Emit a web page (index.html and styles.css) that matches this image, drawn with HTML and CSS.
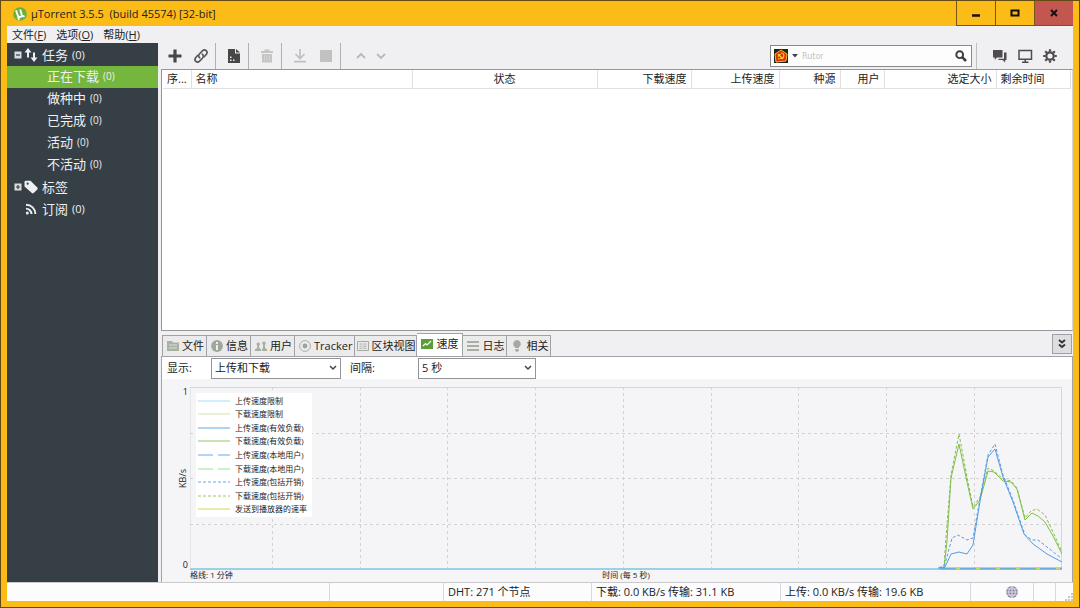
FILE: index.html
```html
<!DOCTYPE html>
<html lang="zh-CN">
<head>
<meta charset="utf-8">
<title>µTorrent 3.5.5</title>
<link rel="stylesheet" href="styles.css">
</head>
<body>
<div class="window">
  <header class="titlebar">
    <svg class="logo" viewBox="0 0 14 14"><circle cx="7" cy="7" r="6.8" fill="#68b03f"/><path d="M3 3.2 4.6 8c.6 2 2.800 2.600 4.200 1.200M7.200 2.500l1.500 5.200c.5 1.500 1.600 1.800 2.800 1.300M5 9.500l1 3.500" fill="none" stroke="#fff" stroke-width="1.900"/></svg>
    <h1 class="title">µTorrent 3.5.5&nbsp; (build 45574) [32-bit]</h1>
    <div class="window-buttons">
      <button class="winbtn" aria-label="最小化"><svg viewBox="0 0 12 12"><path d="M2 8.500h8" stroke="#111" stroke-width="2.500"/></svg></button>
      <button class="winbtn" aria-label="最大化"><svg viewBox="0 0 12 12"><path d="M2.500 3.500h7v5h-7z" fill="none" stroke="#111" stroke-width="2"/></svg></button>
      <button class="winbtn close" aria-label="关闭"><svg viewBox="0 0 12 12"><path d="M3 3l6 6M9 3l-6 6" stroke="#111" stroke-width="1.900"/></svg></button>
    </div>
  </header>
  <div class="client">
    <nav class="menubar">
      <button>文件(<u>F</u>)</button>
      <button>选项(<u>O</u>)</button>
      <button>帮助(<u>H</u>)</button>
    </nav>
    <div class="workspace">
      <nav class="sidebar">
        <a class="group" href="#tasks">
          <svg class="toggle" viewBox="0 0 8 8"><path d="M.5.5h7v7h-7z" fill="#d9dcde"/><path d="M2 4h4" stroke="#364047" stroke-width="1.200"/></svg>
          <svg class="side-icon" viewBox="0 0 14 14"><path d="M4 0 .5 4.500H3v5h2v-5h2.500zM10 14l3.500-4.500H11v-5H9v5H6.500z" fill="#eef0f1"/></svg>
          任务 <small>(0)</small></a>
        <a class="item selected" href="#downloading">正在下载 <small>(0)</small></a>
        <a class="item" href="#seeding">做种中 <small>(0)</small></a>
        <a class="item" href="#done">已完成 <small>(0)</small></a>
        <a class="item" href="#active">活动 <small>(0)</small></a>
        <a class="item" href="#inactive">不活动 <small>(0)</small></a>
        <a class="group" href="#labels">
          <svg class="toggle" viewBox="0 0 8 8"><path d="M.5.5h7v7h-7z" fill="#d9dcde"/><path d="M2 4h4M4 2v4" stroke="#364047" stroke-width="1.200"/></svg>
          <svg class="side-icon" viewBox="0 0 14 14"><path fill-rule="evenodd" d="M.5 2q0-1.300 1.300-1.300h4.700L13.300 7.600q.8.900 0 1.800L9.700 13q-.9.800-1.800 0L.5 6.500zM3.600 2.600a1.100 1.100 0 1 0 .1 2.200 1.100 1.100 0 0 0-.1-2.200z" fill="#eef0f1"/></svg>
          标签</a>
        <a class="group feed" href="#feeds">
          <svg class="side-icon" viewBox="0 0 14 14"><circle cx="3.300" cy="10.900" r="1.500" fill="#eef0f1"/><path d="M2 6.600a5.500 5.500 0 0 1 5.500 5.500M2 2.700a9.400 9.400 0 0 1 9.400 9.400" fill="none" stroke="#eef0f1" stroke-width="1.900"/></svg>
          订阅 <small>(0)</small></a>
      </nav>
      <main class="main">
        <div class="toolbar">
          <div class="tools">
            <button aria-label="添加"><svg viewBox="0 0 16 16"><path d="M8 1.500v13M1.500 8h13" stroke="#474747" stroke-width="3.200"/></svg></button>
            <button aria-label="添加链接"><svg viewBox="0 0 16 16"><g fill="none" stroke="#555" stroke-width="1.600" stroke-linecap="round"><path d="M6.800 9.800C5 8.400 5.600 6.900 6.600 5.800L9.400 2.900c2.700-2.400 6 .6 4 3.400l-2.200 2.400"/><path d="M9.200 6.200c1.800 1.400 1.200 2.900.2 4l-2.800 2.900c-2.700 2.400-6-.6-4-3.400l2.200-2.400"/></g></svg></button>
          </div>
          <div class="tools">
            <button aria-label="制作种子"><svg viewBox="0 0 16 16"><path fill-rule="evenodd" d="M2 1h7v4.500h5V15H2zM4 8.500V10h1.500V8.500zM4 11.500V13h1.500v-1.500zM7 11.500V13h1.500v-1.500z" fill="#474747"/><path d="M10 1v3.500h4z" fill="#474747"/></svg></button>
          </div>
          <div class="tools">
            <button aria-label="删除" disabled><svg viewBox="0 0 16 16"><path d="M2 3h3.500V1.500h5V3H14v2H2zM3 6h10v8.500H3z" fill="#c5c5c6"/><path d="M5.500 7.500v5M8 7.500v5M10.500 7.500v5" stroke="#d4d4d5"/></svg></button>
          </div>
          <div class="tools">
            <button aria-label="开始" disabled><svg viewBox="0 0 16 16"><path d="M8 1v9M3.500 6 8 10.500 12.500 6M2 13.700h12" fill="none" stroke="#c0c0c1" stroke-width="1.700"/></svg></button>
            <button aria-label="停止" disabled><svg viewBox="0 0 16 16"><path d="M2 2h12v12H2z" fill="#c1c1c2"/></svg></button>
          </div>
          <div class="tools arrows">
            <button aria-label="上移" disabled><svg viewBox="0 0 16 16"><path d="M4 10l4-4 4 4" fill="none" stroke="#b9b9bb" stroke-width="1.800"/></svg></button>
            <button aria-label="下移" disabled><svg viewBox="0 0 16 16"><path d="M4 6l4 4 4-4" fill="none" stroke="#b9b9bb" stroke-width="1.800"/></svg></button>
          </div>
          <form class="search">
            <button type="button" class="engine" aria-label="搜索引擎">
              <svg class="engine-logo" viewBox="0 0 14 14"><path d="M0 0h14v14H0z" fill="#17241f"/><path d="M7 1l6 4-1 7-10 1L1 5z" fill="#df2a10" stroke="#f6c51b"/><path d="M4 5l5 5M4 7.500 6.500 5M7 4c4 0 3.500 5 .5 5.500L4 10" fill="none" stroke="#ffcf20" stroke-width="1.200"/></svg>
              <svg class="caret" viewBox="0 0 6 4"><path d="M0 0h6L3 3.500z" fill="#444"/></svg>
            </button>
            <input type="text" placeholder="Rutor" aria-label="搜索">
            <button type="button" aria-label="搜索"><svg class="lens" viewBox="0 0 12 12"><circle cx="4.700" cy="4.700" r="3.400" fill="none" stroke="#3e3e3e" stroke-width="1.900"/><path d="M7.200 7.200 11 11" stroke="#3e3e3e" stroke-width="2.600"/></svg></button>
          </form>
          <div class="extras">
            <button aria-label="聊天"><svg viewBox="0 0 16 16"><path d="M1 2h9.500v7.500H5L2.800 12V9.500H1z" fill="#4f4b4e"/><path d="M12 4.500h2.500V12h-1.300v2.500L10.500 12H6.500v-1.300H12z" fill="#4f4b4e"/></svg></button>
            <button aria-label="远程"><svg viewBox="0 0 16 16"><path d="M2 2.500h12.500v8.700H2zM5 14.200h6.500M8.200 11v3" fill="none" stroke="#4f4b4e" stroke-width="1.500"/></svg></button>
            <button aria-label="设置"><svg viewBox="0 0 16 16"><circle cx="8" cy="8" r="3.700" fill="none" stroke="#4f4b4e" stroke-width="2.200"/><path d="M8 1.200v2.300M8 12.500v2.300M1.200 8h2.300M12.500 8h2.300M3.200 3.200l1.600 1.600M11.200 11.200l1.600 1.600M12.800 3.200l-1.600 1.600M4.800 11.200l-1.600 1.600" stroke="#4f4b4e" stroke-width="2.200"/></svg></button>
          </div>
        </div>
        <section class="torrents">
          <table>
            <colgroup><col class="c-order"><col class="c-name"><col class="c-status"><col class="c-down"><col class="c-up"><col class="c-seeds"><col class="c-peers"><col class="c-size"><col></colgroup>
            <thead><tr><th>序...</th><th>名称</th><th class="center">状态</th><th class="right">下载速度</th><th class="right">上传速度</th><th class="right">种源</th><th class="right">用户</th><th class="right">选定大小</th><th>剩余时间</th></tr></thead>
          </table>
        </section>
        <div class="tabbar">
          <div class="tabs" role="tablist">
            <button role="tab"><svg viewBox="0 0 12 12"><path d="M0 1h5l1 1.500h6V11H0z" fill="#a9b0a5"/><path d="M2 5h8M2 8h8" stroke="#dce0da"/></svg>文件</button>
            <button role="tab"><svg viewBox="0 0 12 12"><circle cx="6" cy="6" r="5.900" fill="#9fa79c"/><path d="M6 2v2M6 5v5" stroke="#eceeeb" stroke-width="2"/></svg>信息</button>
            <button role="tab"><svg viewBox="0 0 12 12"><path d="M3.200 2.500a1.700 1.700 0 0 1 1 3.100V8l1.800 1.200V11H0V9.200L2.200 8V5.600a1.700 1.700 0 0 1 1-3.100zM9 1.500a1.700 1.700 0 0 1 1 3.100V8l2 1.200V11H7V9.200L8 8V4.600a1.700 1.700 0 0 1 1-3.100z" fill="#a6b0a4"/></svg>用户</button>
            <button role="tab"><svg viewBox="0 0 12 12"><circle cx="6" cy="6" r="5.400" fill="none" stroke="#a9b0a7"/><circle cx="6" cy="6" r="2.400" fill="#9ba498"/></svg>Tracker</button>
            <button role="tab"><svg viewBox="0 0 12 12"><path d="M.5 1.500h11v9H.5zM2.500 4h3M6.500 4h3M2.500 6.200h2M5.500 6.200h4M2.500 8.300h3M6.500 8.300h3" fill="none" stroke="#a4aaa2"/></svg>区块视图</button>
            <button role="tab" aria-selected="true" class="current"><svg viewBox="0 0 12 12"><path d="M0 1h12v10H0z" fill="#5b9e35"/><path d="M2 8l2.500-2.500L6 7l4-4" fill="none" stroke="#fff" stroke-width="1.200"/></svg>速度</button>
            <button role="tab"><svg viewBox="0 0 12 12"><path d="M0 2h12M0 6h12M0 10h12" stroke="#a8afa4" stroke-width="1.800"/></svg>日志</button>
            <button role="tab"><svg viewBox="0 0 12 12"><path d="M6 0a3.800 3.800 0 0 1 2 7v1H4V7a3.800 3.800 0 0 1 2-7zM4.300 9h3.400v2L6 12l-1.700-1z" fill="#a4aaa1"/></svg>相关</button>
          </div>
          <button class="collapse" aria-label="折叠"><svg viewBox="0 0 12 12"><path d="M3 2l3 2.500L9 2M3 6.500 6 9l3-2.500" fill="none" stroke="#333" stroke-width="1.900"/></svg></button>
        </div>
        <section class="panel">
          <div class="options">
            <label for="show">显示:</label>
            <select id="show" class="wide"><option>上传和下载</option></select>
            <label for="interval" class="second">间隔:</label>
            <select id="interval"><option>5 秒</option></select>
          </div>
          <div class="chart">
            <div class="yaxis"><span>1</span><span class="unit">KB/s</span><span>0</span></div>
            <div class="plot">
              <svg class="graph" viewBox="0 0 872 183" preserveAspectRatio="none">
                <path class="frame" d="M0 182V.5H871.500V182"/>
                <path class="grid" d="M82.500 0v182M170.500 0v182M257.500 0v182M345.500 0v182M433.500 0v182M521.500 0v182M608.500 0v182M696.500 0v182M784.500 0v182M0 46.500h872M0 91.500h872M0 137.500h872"/>
                <path class="base" d="M0 182h872"/>
                <path class="bottom" d="M750 181.500h122"/>
                <path class="yellow" d="M766 181.500h106" stroke-dasharray="4 16"/>
                <path class="green dash" d="M754 181 756 150 761 88 769 47 777 90 783 120 790 110 798 81 804 84 813 92 821 94 827 101 835 131 841 124 847 122 855 128 863 145 872 165"/>
                <path class="green" d="M754 181 757 154 761 91 769 57 777 95 783 122 790 113 798 84 804 85 813 94 821 95 827 102 835 133 842 126 848 129 855 135 863 149 872 167"/>
                <path class="blue dash" d="M749 181 755 177 762 151 768 148 777 153 783 151 791 106 798 68 805 57 813 88 823 113 835 148 842 153 848 153 857 160 871 171"/>
                <path class="blue" d="M748 181 755 180 761 167 769 165 777 167 783 158 791 108 798 70 805 62 813 90 823 115 834 147 843 157 857 167 872 175"/>
              </svg>
              <ul class="legend">
                <li><svg viewBox="0 0 32 4"><path d="M0 2h32" stroke="#a2dcf3"/></svg>上传速度限制</li>
                <li><svg viewBox="0 0 32 4"><path d="M0 2h32" stroke="#cfe5a5"/></svg>下载速度限制</li>
                <li><svg viewBox="0 0 32 4"><path d="M0 2h32" stroke="#60a5e7"/></svg>上传速度(有效负载)</li>
                <li><svg viewBox="0 0 32 4"><path d="M0 2h32" stroke="#91c760"/></svg>下载速度(有效负载)</li>
                <li><svg viewBox="0 0 32 4"><path d="M0 2h32" stroke="#68aaf0" stroke-dasharray="15 5"/></svg>上传速度(本地用户)</li>
                <li><svg viewBox="0 0 32 4"><path d="M0 2h32" stroke="#99e59b" stroke-dasharray="15 5"/></svg>下载速度(本地用户)</li>
                <li><svg viewBox="0 0 32 4"><path d="M0 2h32" stroke="#62a8ed" stroke-dasharray="3 2"/></svg>上传速度(包括开销)</li>
                <li><svg viewBox="0 0 32 4"><path d="M0 2h32" stroke="#9cc860" stroke-dasharray="3 2"/></svg>下载速度(包括开销)</li>
                <li><svg viewBox="0 0 32 4"><path d="M0 2h32" stroke="#d3d84c"/></svg>发送到播放器的速率</li>
              </ul>
            </div>
            <div class="xaxis"><span>格线: 1 分钟</span><span>时间 (每 5 秒)</span><span></span></div>
          </div>
        </section>
      </main>
    </div>
    <footer class="statusbar">
      <span></span><span></span><span>DHT: 271 个节点</span><span>下载: 0.0 KB/s 传输: 31.1 KB</span><span>上传: 0.0 KB/s 传输: 19.6 KB</span>
      <span class="globe"><svg viewBox="0 0 12 12"><circle cx="6" cy="6" r="5.900" fill="#8c84a4"/><path d="M0 6h12M1 3h10M1 9h10M6 0v12M6 .5c-4.500 3-4.500 8 0 11M6 .5c4.500 3 4.500 8 0 11" fill="none" stroke="#eeeaf4" stroke-width=".8"/></svg></span>
      <span></span>
      <span class="grip"><svg viewBox="0 0 8 8"><path d="M6 0h2v2H6zM3 3h2v2H3zM6 3h2v2H6zM0 6h2v2H0zM3 6h2v2H3zM6 6h2v2H6z" fill="#c5c5c5"/></svg></span>
    </footer>
  </div>
</div>
</body>
</html>
```
FILE: styles.css
```css
* { box-sizing: border-box; }
body {
  margin: 0;
  font: 11px/16px "Open Sans", "Noto Sans CJK SC", sans-serif;
  color: #222;
}
button { margin: 0; padding: 0; border: 0; background: none; font: inherit; color: inherit; }
svg { display: block; flex: none; }

.window {
  display: flex;
  flex-direction: column;
  height: 100vh;
  padding: 0 6px 6px;
  border: 1px solid #634b12;
  background: #fbbc17;
}
.titlebar { display: flex; align-items: center; flex: none; height: 25px; padding-left: 6px; gap: 4px; }
.logo { width: 14px; height: 14px; }
.title { margin: 0; font-size: 11px; font-weight: 400; flex: 1; }
.window-buttons { display: flex; align-self: stretch; }
.winbtn {
  display: grid;
  place-items: center;
  width: 39px;
  border: solid #765615;
  border-width: 0 0 1px 1px;
}
.winbtn svg { width: 12px; height: 12px; }
.winbtn.close { background: #c35750; }

.client { display: flex; flex-direction: column; flex: 1; min-height: 0; background: #f0eff1; }
.menubar { display: flex; align-items: center; gap: 10px; height: 17px; padding-left: 5px; flex: none; }
.workspace { display: flex; flex: 1; min-height: 0; }

.sidebar { width: 151px; flex: none; background: #363f46; color: #eef0f1; padding-top: 1px; }
.sidebar a { display: flex; align-items: center; height: 22px; color: inherit; text-decoration: none; font-size: 13px; }
.sidebar small { font-size: 11px; margin-left: 4px; }
.sidebar .item { padding: 0 0 2px 40px; }
.sidebar .item small { font-size: 10px; }
.sidebar .selected { background: #75b63d; }
.sidebar .group { padding-left: 7px; }
.sidebar .feed { padding-left: 17px; }
.toggle { width: 8px; height: 8px; margin-right: 2px; }
.side-icon { width: 14px; height: 14px; margin-right: 4px; }

.main { display: flex; flex-direction: column; flex: 1; min-width: 0; padding-left: 3px; }
.toolbar { display: flex; height: 26px; flex: none; }
.tools { display: flex; align-items: center; gap: 10px; padding: 0 6px 0 10px; border-right: 1px solid #b0b0b1; }
.tools:first-child { padding: 0 6px; }
.tools svg, .extras svg { width: 16px; height: 16px; }
.tools.arrows { border: 0; gap: 4px; padding-left: 12px; }
.search {
  display: flex;
  align-items: center;
  width: 202px;
  height: 22px;
  margin: 2px 4px 0 auto;
  padding: 0 4px 0 3px;
  border: 1px solid #89898b;
  background: #fdfdfd;
}
.search input {
  flex: 1;
  min-width: 0;
  padding: 0 4px;
  border: 0;
  background: transparent;
  font: 8px "DejaVu Sans", sans-serif;
}
.search input::placeholder { color: #c3c3c3; opacity: 1; }
.engine { display: flex; align-items: center; gap: 4px; }
.engine-logo { width: 14px; height: 14px; }
.caret { width: 6px; height: 4px; }
.lens { width: 12px; height: 12px; }
.extras { display: flex; align-items: center; gap: 9px; padding: 0 15px; border-left: 1px solid #c0c0c1; }

.torrents { height: 262px; flex: none; border: 1px solid #96969b; border-right-color: #d5d5d8; background: #fff; padding: 0 1px; }
table { width: 100%; table-layout: fixed; border-collapse: collapse; }
th {
  height: 18px;
  padding: 0 4px;
  border: solid #e1e1e3;
  border-width: 0 1px 1px 0;
  font-weight: 400;
  text-align: left;
  white-space: nowrap;
}
th.right { text-align: right; }
th.center { text-align: center; }
.c-order { width: 28px; }
.c-name { width: 221px; }
.c-status { width: 185px; }
.c-down { width: 94px; }
.c-up { width: 88px; }
.c-seeds { width: 61px; }
.c-peers { width: 44px; }
.c-size { width: 112px; }

.tabbar { display: flex; justify-content: space-between; align-items: flex-end; height: 25px; flex: none; padding: 0 1px; }
.tabs { display: flex; align-items: flex-end; }
.tabs button {
  display: flex;
  align-items: center;
  gap: 3px;
  height: 21px;
  padding: 0 2px 0 4px;
  border: solid #a2a2a6;
  border-width: 1px 1px 0 0;
  background: #ebebec;
}
.tabs button:nth-child(5) { padding: 0 1px 0 2px; gap: 2px; }
.tabs button:first-child { border-left-width: 1px; }
.tabs svg { width: 12px; height: 12px; }
.tabs .current { height: 23px; padding: 0 4px 3px; background: #fff; }
.collapse { display: grid; place-items: center; width: 20px; height: 20px; margin-bottom: 2px; border: 1px solid #a0a0a4; background: #dedee1; }
.collapse svg { width: 12px; height: 12px; }

.panel { display: flex; flex-direction: column; flex: 1; min-height: 0; border: solid #a2a2a8; border-width: 1px 1px 0; background: #fff; }
.options { display: flex; align-items: center; height: 22px; flex: none; padding-left: 5px; }
.options label { width: 44px; }
.options .second { width: 68px; margin-left: 9px; }
select {
  appearance: none;
  width: 118px;
  height: 21px;
  padding: 0 3px;
  border: 1px solid #939398;
  border-radius: 0;
  color: inherit;
  font: inherit;
  background: #fff url("data:image/svg+xml,%3Csvg xmlns='http://www.w3.org/2000/svg' viewBox='0 0 8 6'%3E%3Cpath d='M1 1l3 3 3-3' fill='none' stroke='%23444' stroke-width='1.500'/%3E%3C/svg%3E") no-repeat right 3px center / 8px 6px;
}
select.wide { width: 130px; }

.chart {
  display: grid;
  flex: 1;
  min-height: 0;
  grid-template: minmax(0, 1fr) 12px / 28px minmax(0, 1fr);
  padding: 8px 10px 0 0;
  background: #f5f4f6;
  font-size: 8px;
  line-height: 10px;
}
.yaxis { display: flex; flex-direction: column; justify-content: space-between; align-items: flex-end; padding-right: 2px; font-size: 9px; }
.unit { writing-mode: vertical-rl; transform: rotate(180deg); }
.plot { position: relative; }
.graph { width: 100%; height: 100%; }
.graph path { fill: none; vector-effect: non-scaling-stroke; }
.graph .frame { stroke: #d6d5d8; }
.graph .grid { stroke: #d2d1d4; stroke-dasharray: 3 3; }
.graph .base { stroke: #9bd0e5; stroke-width: 2px; }
.graph .bottom { stroke: #67addd; stroke-width: 2px; }
.graph .yellow { stroke: #cad66a; stroke-width: 2px; }
.graph .green { stroke: #81bf4b; }
.graph .blue { stroke: #559de7; }
.graph .dash { stroke-dasharray: 3 2; }
.legend {
  position: absolute;
  left: 6px;
  top: 6px;
  display: grid;
  grid-auto-rows: 1fr;
  width: 116px;
  height: 124px;
  margin: 0;
  padding: 1px 2px;
  list-style: none;
  background: #fff;
}
.legend li { display: flex; align-items: center; gap: 5px; white-space: nowrap; }
.legend svg { width: 32px; height: 4px; }
.xaxis { grid-column: 2; display: grid; grid-template-columns: 1fr auto 1fr; }

.statusbar {
  display: grid;
  grid-template-columns: 323fr 114fr 148fr 189fr 190fr 63px 22px 17px;
  flex: none;
  height: 19px;
  border-top: 1px solid #cacacc;
  background: #fcfcfc;
}
.statusbar span { display: flex; align-items: center; padding-left: 4px; border-right: 1px solid #d8d8da; white-space: nowrap; }
.statusbar .globe { justify-content: center; padding-left: 20px; }
.globe svg { width: 12px; height: 12px; }
.statusbar .grip { align-items: flex-end; justify-content: flex-end; border: 0; }
.grip svg { width: 8px; height: 8px; }
```
